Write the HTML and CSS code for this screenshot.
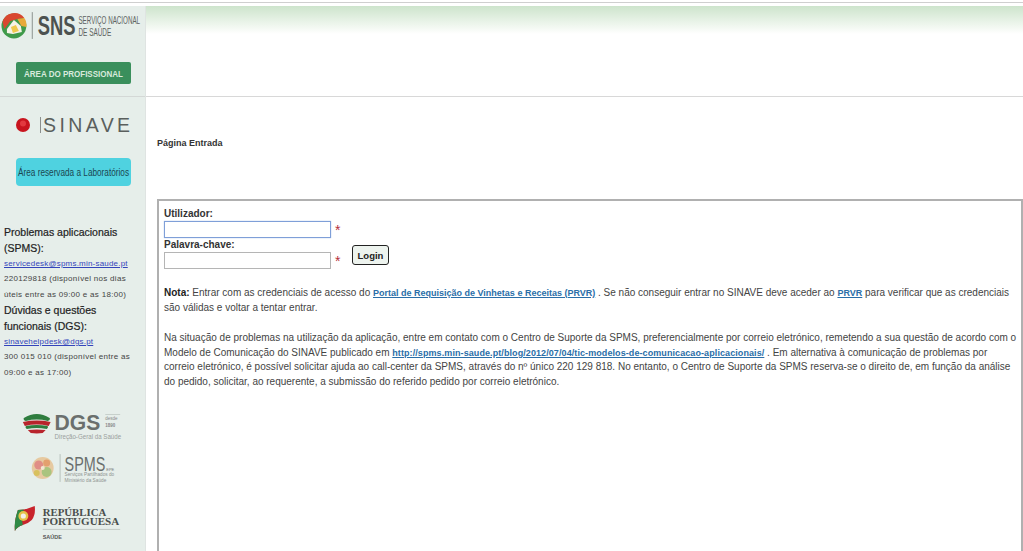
FILE: index.html
```html
<!DOCTYPE html>
<html lang="pt">
<head>
<meta charset="utf-8">
<title>SINAVE</title>
<link rel="stylesheet" href="styles.css">
</head>
<body>
<div class="topline"></div>
<div class="layout">
  <aside class="sidebar">
    <div class="side-head">
      <svg class="logo-sns" viewBox="0 0 146 44" width="145" height="44">
        <circle cx="14" cy="18" r="12.5" fill="#3f9a4a"/>
        <path d="M2.5 14a12.5 12.5 0 0 1 22-4l-7 1-7 2-6 8z" fill="#d9472f"/>
        <path d="M24.5 10a12.5 12.5 0 0 1 2 9l-5-1-4-7z" fill="#e8a93a"/>
        <path d="M7 21l7-9 7 6 1 6-9 2-6-1z" fill="#f6f3e8"/>
        <path d="M11 19l5-2 3 6-6 2z" fill="#efc94e"/>
        <rect x="32" y="4" width="1" height="27" fill="#8c9490"/>
        <text x="38" y="27" class="sns-big" textLength="38" lengthAdjust="spacingAndGlyphs">SNS</text>
        <text x="79" y="16" class="sns-small" textLength="62" lengthAdjust="spacingAndGlyphs">SERVIÇO NACIONAL</text>
        <text x="79" y="28" class="sns-small" textLength="33" lengthAdjust="spacingAndGlyphs">DE SAÚDE</text>
      </svg>
      <a class="btn-prof"><svg viewBox="0 0 115 22" width="115" height="22"><text x="8" y="14.500" class="prof-text" textLength="99" lengthAdjust="spacingAndGlyphs">ÁREA DO PROFISSIONAL</text></svg></a>
    </div>
    <div class="side-body">
      <div class="sinave">
        <svg viewBox="0 0 16 16" width="16" height="16"><circle cx="8" cy="8" r="7" fill="#c8141e"/><circle cx="8" cy="6.500" r="3" fill="#e2393f"/></svg>
        <span class="sinave-bar"></span>
        <span class="sinave-text">SINAVE</span>
      </div>
      <a class="btn-lab"><svg viewBox="0 0 115 28" width="115" height="28"><text x="2" y="18" class="lab-text" textLength="111" lengthAdjust="spacingAndGlyphs">Área reservada a Laboratórios</text></svg></a>
      <div class="contacts">
        <h4>Problemas aplicacionais (SPMS):</h4>
        <a class="mail">servicedesk@spms.min-saude.pt</a>
        <p>220129818 (disponível nos dias úteis entre as 09:00 e as 18:00)</p>
        <h4>Dúvidas e questões funcionais (DGS):</h4>
        <a class="mail">sinavehelpdesk@dgs.pt</a>
        <p>300 015 010 (disponível entre as 09:00 e as 17:00)</p>
      </div>
      <svg class="logo-dgs" viewBox="0 0 146 30" width="145" height="30">
        <path d="M24 6q13-8 26 0q1 2-2 3q-11-3-22 0q-3-1-2-3z" fill="#2f7d3f"/>
        <path d="M23 10q14-3 28 0l-2 4q-12-3-24 0z" fill="#b8242c"/>
        <path d="M26 14q11-2 22 0q1 2-1 3q-10-2-20 0q-2-1-1-3z" fill="#2f7d3f"/>
        <path d="M28 18q9-1 18 0l-3 3q-6 1-12 0z" fill="#b8242c"/>
        <text x="55" y="18" class="dgs-big" textLength="46" lengthAdjust="spacingAndGlyphs">DGS</text>
        <text x="106" y="8" class="dgs-mini">desde</text>
        <text x="106" y="15" class="dgs-mini dgs-year">1890</text>
        <rect x="106" y="2" width="15" height="0.500" fill="#a9b2ad"/>
        <text x="55" y="27" class="dgs-sub" textLength="67" lengthAdjust="spacingAndGlyphs">Direção-Geral da Saúde</text>
      </svg>
      <svg class="logo-spms" viewBox="0 0 146 36" width="145" height="36">
        <circle cx="43" cy="19" r="11" fill="#e6c9a0"/>
        <circle cx="39" cy="16" r="4.500" fill="#e08e86"/>
        <circle cx="47" cy="23" r="5" fill="#a9c47f"/>
        <circle cx="47" cy="14" r="3.500" fill="#e3a06e"/>
        <circle cx="37" cy="24" r="3" fill="#d8c15e"/>
        <circle cx="43" cy="19" r="2" fill="#f3e6d0"/>
        <rect x="60" y="5" width="1" height="28" fill="#b8c2bd"/>
        <text x="65" y="22" class="spms-big" textLength="41" lengthAdjust="spacingAndGlyphs">SPMS</text>
        <text x="107" y="22" class="spms-mini">EPE</text>
        <text x="65" y="27.500" class="spms-sub" textLength="50" lengthAdjust="spacingAndGlyphs">Serviços Partilhados do</text>
        <text x="65" y="33" class="spms-sub" textLength="42" lengthAdjust="spacingAndGlyphs">Ministério da Saúde</text>
      </svg>
      <svg class="logo-rp" viewBox="0 0 146 44" width="145" height="44">
        <path d="M18 11q8 0 17-4q1 9-3 14q-4 4-9 5q-6 2-8 6q-1-10 3-21z" fill="#c8242c"/>
        <path d="M18 11q3 0 6-.5q-3 8-1 15.500q-6 2-8 6q-1-10 3-21z" fill="#2f8a45"/>
        <circle cx="23.500" cy="17" r="5" fill="#e6c24a"/>
        <circle cx="23.500" cy="17" r="2.600" fill="#f2f0ea"/>
        <text x="43" y="17" class="rp-big" textLength="64" lengthAdjust="spacingAndGlyphs">REPÚBLICA</text>
        <text x="43" y="26" class="rp-big" textLength="77" lengthAdjust="spacingAndGlyphs">PORTUGUESA</text>
        <rect x="43" y="30" width="78" height="0.600" fill="#a9b2ad"/>
        <text x="43" y="40" class="rp-sub">SAÚDE</text>
      </svg>
    </div>
  </aside>
  <main class="content">
    <div class="banner"></div>
    <h1 class="page-title">Página Entrada</h1>
    <section class="panel">
      <form class="login">
        <div class="fields">
          <label class="lbl">Utilizador:</label>
          <div class="field"><input class="inp inp-focus" type="text"><span class="req">*</span></div>
          <label class="lbl">Palavra-chave:</label>
          <div class="field"><input class="inp" type="password"><span class="req">*</span></div>
        </div>
        <button class="btn-login" type="button">Login</button>
      </form>
      <p class="note"><b>Nota:</b> Entrar com as credenciais de acesso do <a class="lnk">Portal de Requisição de Vinhetas e Receitas (PRVR)</a> . Se não conseguir entrar no SINAVE deve aceder ao <a class="lnk">PRVR</a> para verificar que as credenciais são válidas e voltar a tentar entrar.</p>
      <p class="note">Na situação de problemas na utilização da aplicação, entre em contato com o Centro de Suporte da SPMS, preferencialmente por correio eletrónico, remetendo a sua questão de acordo com o Modelo de Comunicação do SINAVE publicado em <a class="lnk lnk-url">http://spms.min-saude.pt/blog/2012/07/04/tic-modelos-de-comunicacao-aplicacionais/</a> . Em alternativa à comunicação de problemas por correio eletrónico, é possível solicitar ajuda ao call-center da SPMS, através do nº único 220 129 818. No entanto, o Centro de Suporte da SPMS reserva-se o direito de, em função da análise do pedido, solicitar, ao requerente, a submissão do referido pedido por correio eletrónico.</p>
    </section>
  </main>
</div>
</body>
</html>
```

FILE: styles.css
```css
html, body {
  margin: 0;
  padding: 0;
  height: 551px;
  overflow: hidden;
  background: #fff;
  font-family: "Liberation Sans", Arial, sans-serif;
}
.topline {
  height: 1px;
  margin-top: 2px;
  margin-bottom: 3px;
  background: #cfcfcf;
}
.layout {
  display: flex;
  height: 545px;
  overflow: hidden;
}
.sidebar {
  width: 145px;
  flex: none;
  background: #e6eeea;
  border-right: 1px solid #dfe4e2;
}
.side-head {
  height: 91px;
  border-bottom: 1px solid #d4d8d6;
  box-sizing: border-box;
  padding-top: 2px;
}
.logo-sns { display: block; }
.sns-big { font: bold 28px "Liberation Sans", sans-serif; fill: #4c5250; }
.sns-small { font: 10.5px "Liberation Sans", sans-serif; fill: #5e6462; }
.btn-prof {
  display: block;
  width: 115px;
  height: 22px;
  margin: 10px 0 0 16px;
  background: #3a8f5c;
  border-radius: 2px;
}
.btn-prof svg { display: block; }
.prof-text { font: bold 9.500px "Liberation Sans", sans-serif; fill: #d8eadd; }
.side-body { padding-top: 19px; }
.sinave {
  display: flex;
  align-items: center;
  height: 18px;
  padding-left: 15px;
}
.sinave-bar {
  width: 1px;
  height: 16px;
  margin: 0 2px 0 9px;
  background: #8b8f8d;
}
.sinave-text {
  font-size: 19.5px;
  letter-spacing: 3.400px;
  color: #5a5f5d;
}
.btn-lab {
  display: block;
  width: 115px;
  height: 28px;
  margin: 24px 0 0 16px;
  background: #4fd2e0;
  border-radius: 4px;
}
.btn-lab svg { display: block; }
.lab-text { font: 11.5px "Liberation Sans", sans-serif; fill: #1c4650; }
.contacts {
  margin-top: 39px;
  padding: 0 11px 0 4px;
}
.contacts h4 {
  margin: 0;
  font-size: 10.5px;
  line-height: 15.5px;
  font-weight: normal;
  color: #222;
  -webkit-text-stroke: 0.2px #222;
}
.mail {
  display: block;
  font-size: 8px;
  line-height: 15px;
  letter-spacing: 0.2px;
  color: #3344bb;
  text-decoration: underline;
}
.contacts p {
  margin: 0 0 1px;
  font-size: 8px;
  line-height: 15.5px;
  letter-spacing: 0.3px;
  color: #444;
}
.logo-dgs { display: block; margin-top: 32px; }
.dgs-big { font: bold 23px "Liberation Sans", sans-serif; fill: #6a6f6d; }
.dgs-mini { font: 4.500px "Liberation Sans", sans-serif; fill: #888; }
.dgs-year { font-weight: bold; }
.dgs-sub { font: 7px "Liberation Sans", sans-serif; fill: #9a9f9d; }
.logo-spms { display: block; margin-top: 7px; }
.spms-big { font: 21px "Liberation Sans", sans-serif; fill: #6a6f6d; }
.spms-mini { font: 4px "Liberation Sans", sans-serif; fill: #777; }
.spms-sub { font: 5px "Liberation Sans", sans-serif; fill: #8f9492; }
.logo-rp { display: block; margin-top: 14px; }
.rp-big { font: bold 10.5px "Liberation Serif", serif; fill: #4a4f4d; }
.rp-sub { font: bold 5.5px "Liberation Sans", sans-serif; fill: #555; }
.content {
  flex: 1;
  min-width: 0;
  display: flex;
  flex-direction: column;
}
.banner {
  height: 91px;
  flex: none;
  box-sizing: border-box;
  border-bottom: 1px solid #d8d8d8;
  background: linear-gradient(#cde4cc 0, #f4f9f3 22px, #fff 28px);
}
.page-title {
  margin: 40px 0 0 11px;
  font-size: 9px;
  line-height: 12px;
  font-weight: bold;
  color: #333;
}
.panel {
  margin: 50px 0 0 11px;
  flex: 1;
  border: 2px solid #b0b0b0;
  border-bottom: 0;
  padding: 6px 4px 0 5px;
}
.login {
  display: flex;
  align-items: flex-end;
}
.fields { width: 188px; }
.lbl {
  display: block;
  font-size: 10px;
  line-height: 13px;
  font-weight: bold;
  color: #333;
}
.field {
  display: flex;
  align-items: center;
  height: 18px;
}
.inp {
  box-sizing: border-box;
  width: 167px;
  height: 17px;
  margin: 0;
  padding: 0;
  border: 1px solid #b5b5b5;
  background: #fff;
  outline: none;
}
.inp-focus { border-color: #7f9fd8; box-shadow: 0 0 1px #9db8e6; }
.req {
  margin-left: 4px;
  font-size: 14px;
  line-height: 14px;
  padding-top: 2px;
  color: #b5303a;
}
.btn-login {
  box-sizing: border-box;
  width: 37px;
  height: 20px;
  margin: 0 0 4px 0;
  padding: 0;
  border: 1px solid #222;
  border-radius: 3px;
  background: #edf3ee;
  font: bold 9.500px "Liberation Sans", sans-serif;
  color: #222;
}
.note {
  margin: 0 0 16px;
  font-size: 10px;
  line-height: 14.6px;
  color: #444;
}
.login + .note { margin-top: 17px; }
.note b { color: #222; }
.lnk {
  color: #2a6ea8;
  font-weight: bold;
  font-size: 9px;
  text-decoration: underline;
}
.lnk-url { letter-spacing: 0.085px; }
```
